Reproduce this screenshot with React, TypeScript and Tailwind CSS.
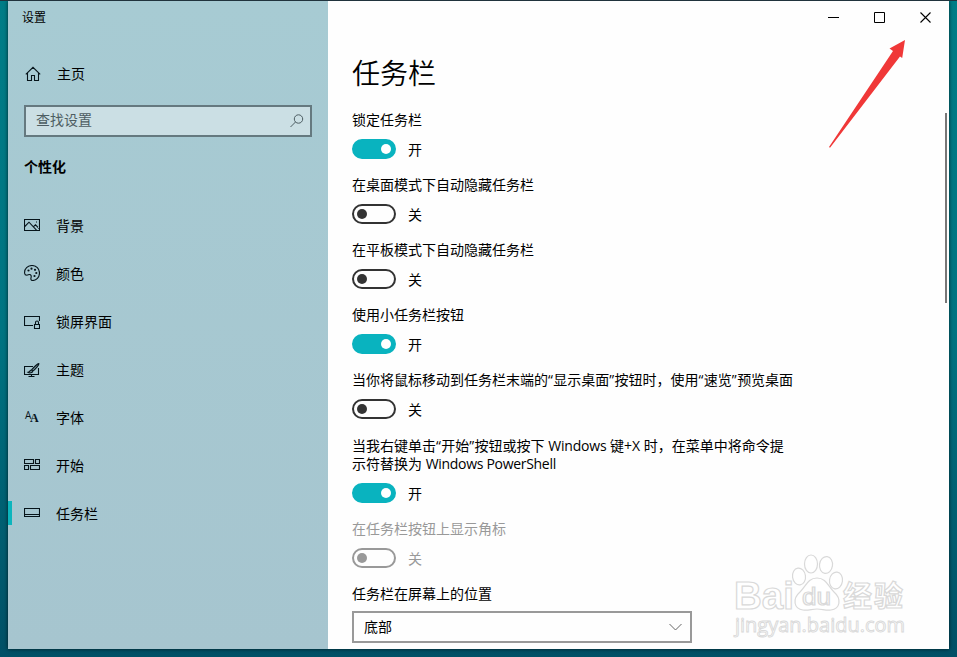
import type { ReactNode } from 'react';
import clsx from 'clsx';

interface NavItem {
  label: string;
  icon: ReactNode;
  active?: boolean;
}

interface Setting {
  label: ReactNode;
  on?: boolean;
  disabled?: boolean;
  className?: string;
}

function Icon({ children }: { children: ReactNode }) {
  return (
    <svg width="16" height="16" viewBox="0 0 16 16" fill="none" stroke="#06141a" strokeWidth="1.1">
      {children}
    </svg>
  );
}

const navItems: NavItem[] = [
  {
    label: '背景',
    icon: (
      <Icon>
        <path d="M.5 2.5h15v11H.5zM.8 9.5 5 5.2l7.5 8M9.5 9.7l2-1.9 4 4" />
        <path d="M12 5h1" />
      </Icon>
    ),
  },
  {
    label: '颜色',
    icon: (
      <Icon>
        <path d="M.6 8.2C.2 3.8 3.8.5 8 .5c4.3 0 7.500 3.300 7.500 7.500S12.200 15.500 8.700 15.500c-1.700 0-2.100-1.200-1.700-2.600.5-1.800.1-3.400-1.500-3.400-1 0-1.500.7-2.600.7-1.300 0-2.200-.8-2.300-2z" />
        <g fill="#06141a" stroke="none">
          <circle cx="4.500" cy="5.500" r="1.1" />
          <circle cx="7.500" cy="3.700" r="1.1" />
          <circle cx="11" cy="4.800" r="1.1" />
          <circle cx="12.300" cy="8" r="1.1" />
          <circle cx="10.500" cy="11" r="1.1" />
        </g>
      </Icon>
    ),
  },
  {
    label: '锁屏界面',
    icon: (
      <Icon>
        <path d="M9 12.500H.5v-9h15V8" />
        <path d="M10.500 11.500h5v4h-5zM11.500 11.500V9.500a1.500 1.500 0 0 1 3 0v2" />
      </Icon>
    ),
  },
  {
    label: '主题',
    icon: (
      <Icon>
        <path d="M9 5.500H.5v8h14V7M7.500 13.500v2M4.500 15.500h6" />
        <path d="M14.900 2.700c-.8-.6-5.700 4-7.300 6.200l1.300 1.200C11 8.500 15.500 3.500 14.900 2.700zM7.500 9C5.700 9 6 11 4 11.400c1.500 1 4.500.6 4.700-1.300" fill="#06141a" fillOpacity="0.25" />
      </Icon>
    ),
  },
  {
    label: '字体',
    icon: (
      <span className="relative block h-4 w-4 leading-none text-[#06141a]">
        <span className="absolute top-[1px] left-[1px] font-['Open_Sans',sans-serif] text-[10px] leading-[11px]">A</span>
        <span className="absolute top-[3px] left-[6px] font-['Liberation_Serif',serif] text-[12px] leading-[13px] font-bold">A</span>
      </span>
    ),
  },
  {
    label: '开始',
    icon: (
      <Icon>
        <path d="M.5 2.500h9v4h-9zM11.500 2.500h4v4h-4zM.5 8.500h4v4h-4zM6.500 8.500h9v4h-9z" />
      </Icon>
    ),
  },
  {
    label: '任务栏',
    active: true,
    icon: (
      <Icon>
        <path d="M.5 3.500h15v8H.5zM.5 9.500h15" />
      </Icon>
    ),
  },
];

const settings: Setting[] = [
  { label: '锁定任务栏', on: true },
  { label: '在桌面模式下自动隐藏任务栏' },
  { label: '在平板模式下自动隐藏任务栏' },
  { label: '使用小任务栏按钮', on: true },
  {
    label: (
      <>
        当你将鼠标移动到任务栏末端的<Quoted>显示桌面</Quoted>按钮时，使用<Quoted>速览</Quoted>预览桌面
      </>
    ),
    className: 'mb-[18px]',
  },
  {
    label: (
      <>
        当我右键单击<Quoted>开始</Quoted>按钮或按下 <span className="tracking-[-0.2px]">Windows</span> 键+X 时，在菜单中将命令提
        <br />
        示符替换为 <span className="tracking-[-0.3px]">Windows PowerShell</span>
      </>
    ),
    on: true,
  },
  { label: '在任务栏按钮上显示角标', disabled: true },
];

function Quoted({ children }: { children: ReactNode }) {
  return (
    <>
      <span className="tracking-[0.4px]">“</span>
      {children}
      <span className="tracking-[0.4px]">”</span>
    </>
  );
}

function Toggle({ on, disabled }: { on?: boolean; disabled?: boolean }) {
  return (
    <div className="flex h-5 items-center gap-3">
      <div
        className={clsx(
          'flex h-5 w-11 items-center rounded-full border-2',
          on ? 'justify-end border-[#09b3bf] bg-[#09b3bf] pr-[3px]' : 'justify-start pl-[3px]',
          !on && (disabled ? 'border-[#999]' : 'border-[#333]'),
        )}
      >
        <div className={clsx('h-2.5 w-2.5 rounded-full', on ? 'bg-white' : disabled ? 'bg-[#999]' : 'bg-[#333]')} />
      </div>
      <span className="pt-0.5">{on ? '开' : '关'}</span>
    </div>
  );
}

function Sidebar() {
  return (
    <aside className="flex w-80 shrink-0 flex-col bg-linear-to-b from-[#a7cbd3] to-[#a6c5cf]">
      <div className="mt-[7px] pl-3.5 text-xs leading-5">设置</div>
      <div className="mt-[36px] flex h-5 items-center gap-4 pl-[17px]">
        <svg width="16" height="16" viewBox="0 0 16 16" fill="none" stroke="#06141a" strokeWidth="1.1">
          <path d="M.8 8.300 8 1.300l7.200 7M2.500 7v7.500h4v-5h3v5h4V7" />
        </svg>
        <span>主页</span>
      </div>
      <div className="mt-[21px] mr-4 ml-4 flex h-8 shrink-0 items-center justify-between border-2 border-[#65797f] bg-[#cbdfe4] pr-1.5 pl-2.5 text-[#4d5d62]">
        <span className="-mt-0.5">查找设置</span>
        <svg width="14" height="14" viewBox="0 0 14 14" fill="none" stroke="#4d5d62">
          <circle cx="8.500" cy="5" r="4.200" />
          <path d="m5.500 8-5 5" />
        </svg>
      </div>
      <h2 className="mt-[20px] pl-4 leading-5 font-bold">个性化</h2>
      <nav className="mt-6">
        {navItems.map((item) => (
          <div key={item.label} className="relative flex h-12 items-center gap-4 pl-4">
            {item.active && <span className="absolute top-3 left-0 h-6 w-1 bg-[#0cb5bd]" />}
            {item.icon}
            <span className="pt-0.5">{item.label}</span>
          </div>
        ))}
      </nav>
    </aside>
  );
}

function Watermark() {
  return (
    <svg
      className="absolute top-[550px] left-[722px]"
      width="190"
      height="92"
      viewBox="0 0 190 92"
      fill="#fff"
      stroke="#d9d9d9"
      strokeWidth="1.200"
    >
      <ellipse cx="77" cy="25.500" rx="6.500" ry="8.500" transform="rotate(-8 77 25.500)" />
      <ellipse cx="89" cy="13" rx="6.500" ry="9" />
      <ellipse cx="104" cy="14" rx="6.500" ry="8.500" transform="rotate(8 104 14)" />
      <ellipse cx="114" cy="29.500" rx="6.500" ry="8.500" transform="rotate(8 114 29.500)" />
      <path d="M95 27c9 0 11 8 17 14 8 7 6 17-3 18-5 .8-9-1-14-1s-9 1.800-14 1c-9-1-11-11-3-18 6-6 8-14 17-14z" />
      <text x="12" y="58" fontSize="39" fontWeight="700" fontFamily="Liberation Sans, sans-serif" textLength="60" lengthAdjust="spacingAndGlyphs">
        Bai
      </text>
      <text x="80" y="54" fontSize="23" fontFamily="Liberation Sans, sans-serif" textLength="29" lengthAdjust="spacingAndGlyphs">
        du
      </text>
      <text x="121" y="56" fontSize="29" fontWeight="700" fontFamily="Noto Sans CJK SC, sans-serif" textLength="60">
        经验
      </text>
      <text x="13" y="81" fontSize="19.500" fontFamily="Open Sans, sans-serif" textLength="170" lengthAdjust="spacingAndGlyphs" strokeWidth="0.900">
        jingyan.baidu.com
      </text>
    </svg>
  );
}

export default function App() {
  return (
    <div className="relative h-[657px] w-[957px] overflow-hidden border-t border-[#20333d] bg-linear-to-b from-[#007d87] via-[#007482] to-[#005066] pr-2 pb-2 pl-2 font-['Open_Sans','Noto_Sans_CJK_SC',sans-serif] text-sm leading-[18px] text-black">
      <div className="flex h-[648px] w-[941px] overflow-hidden bg-[#fefefe] shadow-[0_0_4px_rgba(0,0,0,0.7)]">
        <Sidebar />
        <main className="flex flex-1 flex-col pl-6">
          <div className="flex h-8 shrink-0 items-center justify-end gap-[35px] pr-[18px]">
            <svg width="11" height="11" viewBox="0 0 11 11" stroke="#000">
              <path d="M0 5.500h11" />
            </svg>
            <svg width="11" height="11" viewBox="0 0 11 11" fill="none" stroke="#000">
              <path d="M.5.5h10v10H.5z" />
            </svg>
            <svg width="11" height="11" viewBox="0 0 11 11" stroke="#000" strokeWidth="1.1">
              <path d="m.5.5 10 10m0-10-10 10" />
            </svg>
          </div>
          <h1 className="mt-[20px] mb-[18px] text-[28px] leading-10 font-[350]">任务栏</h1>
          {settings.map((s, i) => (
            <section key={i} className={clsx('flex flex-col gap-2.5', s.className ?? 'mb-[17px]', s.disabled && 'text-[#999]')}>
              <p className="whitespace-nowrap">{s.label}</p>
              <Toggle on={s.on} disabled={s.disabled} />
            </section>
          ))}
          <p>任务栏在屏幕上的位置</p>
          <div className="mt-2 flex h-8 w-[340px] shrink-0 items-center justify-between border-2 border-[#999] pr-2 pl-2.5">
            <span>底部</span>
            <svg width="13" height="8" viewBox="0 0 13 8" fill="none" stroke="#666">
              <path d="m.5 1 6 6 6-6" />
            </svg>
          </div>
        </main>
      </div>

      {/* scrollbar thumb */}
      <div className="absolute top-[112px] left-[945px] h-[190px] w-0.5 bg-[#777]" />

      <svg className="absolute top-[38px] left-[825px]" width="84" height="112" viewBox="0 0 84 112">
        <path d="M80 1 64.500 9.500l3.500 2.500L4 108l1 .8L75 17.500l2.200 1.500z" fill="#f03838" />
      </svg>

      <Watermark />
    </div>
  );
}
